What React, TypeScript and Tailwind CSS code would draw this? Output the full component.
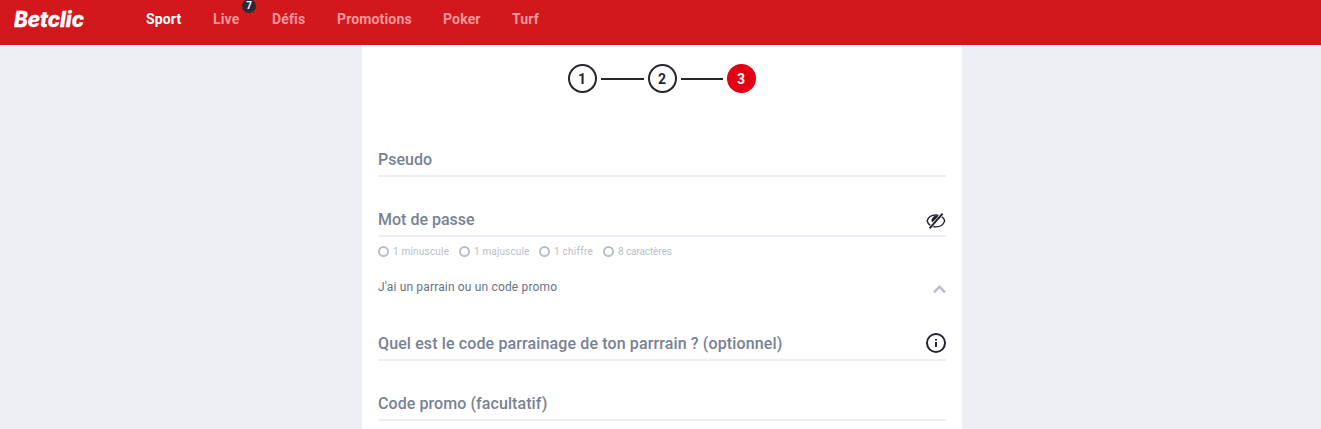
import React from 'react'

type NavItem = {
    label: string
    width: string
    badge?: string
}

type FieldProps = {
    label: string
    tracking: string
    children?: React.ReactNode
}

const NAV_ITEMS: NavItem[] = [
    { label: 'Sport', width: 'w-[35px]' },
    { label: 'Live', width: 'w-[27px]', badge: '7' },
    { label: 'Défis', width: 'w-[33px]' },
    { label: 'Promotions', width: 'w-[74px]' },
    { label: 'Poker', width: 'w-[37px]' },
    { label: 'Turf', width: 'w-[27px]' },
]

const PASSWORD_RULES = [
    { label: '1 minuscule', width: 'w-[81px]', tracking: 'tracking-[0.2px]' },
    { label: '1 majuscule', width: 'w-20', tracking: 'tracking-[0.15px]' },
    { label: '1 chiffre', width: 'w-16', tracking: 'tracking-[0.25px]' },
    { label: '8 caractères', width: 'w-[75px]', tracking: 'tracking-[-0.1px]' },
]

const EyeOffIcon: React.FC = () => (
    <svg width="20" height="16" viewBox="0 0 20 16" fill="none">
        <path d="M12.500 2.400C11.700 2.100 10.900 2 10 2 5.500 2 2 4.500 1.200 8 1.600 9.900 2.700 11.200 4.300 12.300" stroke="#25252f" strokeWidth="1.400" />
        <path d="M15.900 3.900C17.300 4.900 18.300 6.200 18.700 7.900 17.600 11.500 14.300 13.900 10 13.900 9.100 13.900 8.200 13.800 7.400 13.500" stroke="#25252f" strokeWidth="1.400" />
        <path d="M12.300 3.400A4.500 4.500 0 0 0 6.200 9.500Z" fill="#25252f" />
        <path d="M3.600 15.300 16.600 .7" stroke="#25252f" strokeWidth="2" />
    </svg>
)

const InfoIcon: React.FC = () => (
    <svg width="20" height="20" viewBox="0 0 20 20" fill="none">
        <circle cx="10" cy="10" r="9" stroke="#25252f" strokeWidth="2" />
        <path d="M9 6h2v1.500H9zM9 9h2v5H9z" fill="#25252f" />
    </svg>
)

const Field: React.FC<FieldProps> = ({ label, tracking, children }) => (
    <div className="flex h-[38px] justify-between border-b-2 border-[#eeeff4]">
        <label className={`text-base leading-[42px] font-medium whitespace-nowrap text-[#788294] ${tracking}`}>{label}</label>
        {children}
    </div>
)

const Header: React.FC = () => (
    <header className="flex h-[45px] items-start bg-[#d2171d]">
        <div className="w-[146px] shrink-0 pl-3.5">
            <svg width="74" height="36" viewBox="0 0 74 36">
                <text x="0" y="27" textLength="70" lengthAdjust="spacingAndGlyphs" fill="#fff" stroke="#fff" strokeWidth=".3" className="font-['Inter',sans-serif] text-[21px] font-extrabold italic">Betclic</text>
            </svg>
        </div>
        <nav className="flex gap-8 pt-2.5 text-sm leading-[18px] font-bold tracking-[0.15px]">
            {NAV_ITEMS.map((item, index) => (
                <a key={item.label} className={`relative whitespace-nowrap ${item.width} ${index === 0 ? 'text-white' : 'text-[#ff979d]'}`}>
                    {item.label}
                    {item.badge && (
                        <span className="absolute -top-[11px] left-[29px] flex size-3.5 items-center justify-center rounded-full bg-[#292c35] text-[10px] leading-[10px] tracking-normal text-white">{item.badge}</span>
                    )}
                </a>
            ))}
        </nav>
    </header>
)

const Stepper: React.FC = () => (
    <div className="flex items-center justify-center gap-1 pr-px text-sm font-bold text-[#25272e]">
        <div className="flex size-[29px] items-center justify-center rounded-full border-2 border-[#25272e]">1</div>
        <div className="h-0.5 w-[43px] bg-[#25272e]" />
        <div className="flex size-[29px] items-center justify-center rounded-full border-2 border-[#25272e]">2</div>
        <div className="h-0.5 w-[42px] bg-[#25272e]" />
        <div className="flex size-[29px] items-center justify-center rounded-full bg-[#e30016] text-white">3</div>
    </div>
)

const App: React.FC = () => (
    <div className="flex h-[429px] flex-col overflow-hidden bg-[#eeeff4] font-['Roboto',sans-serif]">
        <Header />
        <div className="flex min-h-0 flex-1 justify-center pl-[3px]">
            <main className="w-[600px] bg-white px-4 pt-[19px]">
                <Stepper />
                <form className="pt-[46px]">
                    <Field label="Pseudo" tracking="tracking-normal" />
                    <div className="h-[22px]" />
                    <Field label="Mot de passe" tracking="tracking-normal">
                        <div className="pt-[14px]"><EyeOffIcon /></div>
                    </Field>
                    <div className="mt-[7px] flex h-3.5 items-center text-[10px] whitespace-nowrap text-[#b9bec9]">
                        {PASSWORD_RULES.map((rule) => (
                            <div key={rule.label} className={`flex items-center gap-1 ${rule.width} ${rule.tracking}`}>
                                <span className="size-[11px] shrink-0 rounded-full border-2 border-[#b9bec9]" />
                                {rule.label}
                            </div>
                        ))}
                    </div>
                    <div className="mt-[19px] flex h-5 justify-between text-xs leading-5 text-[#687386]">
                        <span className="tracking-[0.16px]">J'ai un parrain ou un code promo</span>
                        <svg className="mt-[7px]" width="13" height="10" viewBox="0 0 13 10" fill="none">
                            <path d="M1 8.300 6.500 2.700 12 8.300" stroke="#b9bec9" strokeWidth="2.500" />
                        </svg>
                    </div>
                    <div className="h-[26px]" />
                    <Field label="Quel est le code parrainage de ton parrrain ? (optionnel)" tracking="tracking-[0.125px]">
                        <div className="pt-2.5"><InfoIcon /></div>
                    </Field>
                    <div className="h-[22px]" />
                    <Field label="Code promo (facultatif)" tracking="tracking-[0.08px]" />
                </form>
            </main>
        </div>
    </div>
)

export default App
